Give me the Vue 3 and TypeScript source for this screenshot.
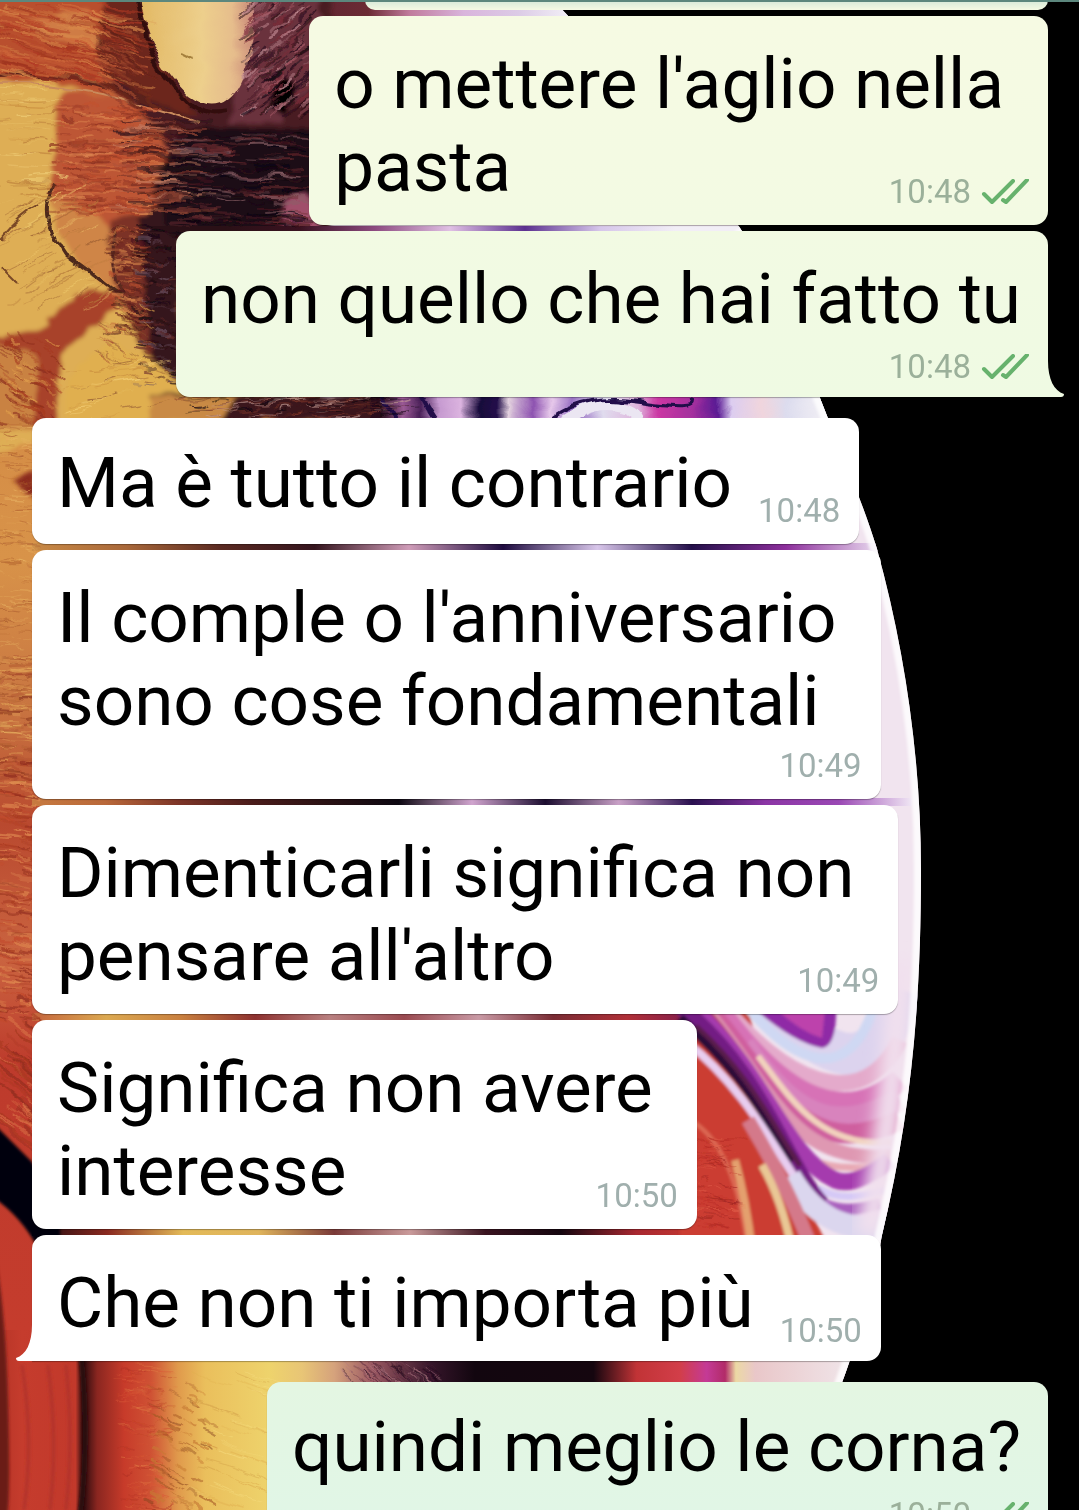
<script setup lang="ts">
type Layout = 'beside' | 'below'

interface Message {
  id: number
  lines: string[]
  time: string
  sent: boolean
  layout: Layout
  tail?: boolean
  newGroup?: boolean
  tint?: string
}

const messages: Message[] = [
  { id: 1, lines: ["o mettere l'aglio nella", 'pasta'], time: '10:48', sent: true, layout: 'beside', tint: 'tint-a' },
  { id: 2, lines: ['non quello che hai fatto tu'], time: '10:48', sent: true, layout: 'below', tail: true, tint: 'tint-b' },
  { id: 3, lines: ['Ma è tutto il contrario'], time: '10:48', sent: false, layout: 'beside', newGroup: true },
  { id: 4, lines: ["Il comple o l'anniversario", 'sono cose fondamentali'], time: '10:49', sent: false, layout: 'below' },
  { id: 5, lines: ['Dimenticarli significa non', "pensare all'altro"], time: '10:49', sent: false, layout: 'beside' },
  { id: 6, lines: ['Significa non avere', 'interesse'], time: '10:50', sent: false, layout: 'beside' },
  { id: 7, lines: ['Che non ti importa più'], time: '10:50', sent: false, layout: 'beside', tail: true },
  { id: 8, lines: ['quindi meglio le corna?'], time: '10:50', sent: true, layout: 'below', newGroup: true, tint: 'tint-c' },
]

/* Lines above the footer row; the footer holds the time and, when it fits, the last line */
const lead = (m: Message): string[] => (m.layout === 'beside' ? m.lines.slice(0, -1) : m.lines)
const last = (m: Message): string => (m.layout === 'beside' ? m.lines[m.lines.length - 1] : '')

/* Wallpaper: seeded brush strokes laid over painted areas */
interface Stroke { d: string; color: string; width: number; opacity: number }

let seed = 17
function rnd(): number {
  seed = (seed * 16807) % 2147483647
  return seed / 2147483647
}

function hatch(
  x: number, y: number, w: number, h: number,
  count: number, length: number, slope: number, colors: string[], size = 2,
): Stroke[] {
  return Array.from({ length: count }, () => {
    const sx = Math.round(x + rnd() * w)
    const sy = Math.round(y + rnd() * h)
    const len = Math.round(length * (0.4 + rnd()))
    const dy = Math.round(len * slope)
    const bend = Math.round((rnd() - 0.5) * 8)
    return {
      d: `M${sx} ${sy}q${Math.round(len / 2)} ${Math.round(dy / 2) + bend} ${len} ${dy}`,
      color: colors[Math.floor(rnd() * colors.length)],
      width: size * (0.5 + rnd()),
      opacity: 0.25 + rnd() * 0.45,
    }
  })
}

const strokes: Stroke[] = [
  ...hatch(-20, 4, 130, 70, 150, 40, 0.25, ['#9c3420', '#d98a4a', '#b23a24', '#cf6a3c']),
  ...hatch(95, 20, 20, 70, 50, 34, 0.6, ['#5c2018', '#a0482e', '#7c2c20']),
  ...hatch(48, 105, 100, 110, 260, 22, 0.02, ['#9e3d28', '#dc8650', '#c4512f', '#8a3020']),
  ...hatch(110, 120, 70, 90, 120, 30, 0.03, ['#4a1a18', '#a8503a', '#24101a', '#c07a60']),
  ...hatch(165, 130, 130, 95, 170, 28, 0.05, ['#0c0710', '#6f2d30', '#8a6066', '#4a1820', '#1c0c16']),
  ...hatch(240, 0, 65, 120, 200, 14, -0.8, ['#2a0e16', '#a65a66', '#7a2c38', '#150a14', '#c08a92']),
  ...hatch(104, 225, 32, 110, 130, 12, 0.1, ['#6c261c', '#b8502f', '#d08048', '#4c1a18']),
  ...hatch(132, 225, 45, 160, 130, 12, 0.1, ['#2c0f12', '#6a2c28', '#120a12', '#6a5060']),
  ...hatch(-15, 85, 50, 110, 40, 34, 0.02, ['#c98d3e', '#f0cf78', '#b87a38'], 1),
  ...hatch(-5, 200, 95, 110, 60, 22, -0.6, ['#b5793a', '#f0cc70', '#94582f'], 1),
  ...hatch(-8, 335, 60, 85, 90, 12, 0.6, ['#a5381f', '#e2a04c', '#8a2c1c']),
  ...hatch(95, 300, 50, 60, 60, 10, 0.6, ['#d09a48', '#8f5530', '#a5482f'], 1),
  ...hatch(60, 360, 100, 60, 30, 22, -0.2, ['#c98d3e', '#8f5530', '#f4d078'], 1),
  ...hatch(-12, 420, 40, 330, 180, 20, 0.05, ['#b0602e', '#e2a658', '#a0502a', '#eab765'], 1),
  ...hatch(-12, 650, 40, 150, 60, 22, 0.02, ['#8d3a20', '#e2a658', '#a8482a']),
  ...hatch(-12, 760, 40, 260, 150, 22, 0.15, ['#a5381f', '#e08a50', '#c24a2c', '#8d2a1c']),
  ...hatch(-12, 1010, 44, 120, 50, 34, 0.8, ['#a5381f', '#dd7a4a', '#8a2a1c']),
  ...hatch(115, 1362, 50, 150, 110, 14, 0.05, ['#d95a38', '#b23424', '#e07a44'], 1),
  ...hatch(145, 1385, 60, 125, 60, 12, 0.5, ['#a65a26', '#c67a34', '#8a4520']),
  ...hatch(185, 1362, 90, 130, 30, 44, 0.35, ['#e0b050', '#f6dd80', '#cf9a44'], 1),
  ...hatch(175, 397, 215, 21, 110, 24, -0.1, ['#0d0710', '#8a3c2c', '#c9a098', '#5a2420'], 1),
  ...hatch(690, 1135, 40, 110, 90, 14, 0.15, ['#9f2622', '#e2604a', '#b52a24'], 1),
  ...hatch(340, 1360, 90, 22, 70, 14, 0.8, ['#1c0a18', '#b07884', '#4a1c34'], 1),
]

const swirls: { d: string; color: string; width: number }[] = [
  { d: 'M770 1000C800 1030 870 1110 902 990', color: '#dcd3ee', width: 42 },
  { d: 'M742 1000C790 1062 850 1092 876 1000', color: '#cfd8f3', width: 10 },
  { d: 'M718 1000C780 1078 860 1120 900 1040', color: '#e4aacb', width: 16 },
  { d: 'M712 1000C775 1092 840 1132 900 1080', color: '#d772b6', width: 22 },
  { d: 'M744 1045C792 1112 830 1138 900 1100', color: '#d883bd', width: 22 },
  { d: 'M700 1000C765 1072 800 1170 900 1120', color: '#cf5f9f', width: 20 },
  { d: 'M758 1056C790 1098 820 1148 890 1142', color: '#f2d3bd', width: 6 },
  { d: 'M705 1010C770 1085 790 1165 890 1156', color: '#df98b2', width: 14 },
  { d: 'M700 1010C765 1085 790 1150 815 1166', color: '#b73864', width: 16 },
  { d: 'M760 1110C790 1150 810 1178 890 1164', color: '#e8a9b4', width: 7 },
  { d: 'M700 1015C770 1085 785 1155 835 1180Q855 1188 890 1160', color: '#a53aae', width: 17 },
  { d: 'M818 1188Q842 1204 884 1190', color: '#d5c9f6', width: 7 },
  { d: 'M806 1192Q834 1220 880 1204', color: '#a95fbe', width: 12 },
  { d: 'M680 1006C765 1075 785 1165 822 1204', color: '#731f84', width: 16 },
  { d: 'M680 1018C745 1075 765 1118 794 1160', color: '#2b0838', width: 9 },
  { d: 'M696 1026C750 1075 770 1120 800 1166', color: '#5a1a4c', width: 5 },
  { d: 'M686 1042C750 1090 785 1170 815 1206Q840 1230 890 1210', color: '#e8cdf0', width: 8 },
  { d: 'M790 1176Q830 1244 900 1222', color: '#dbd6ee', width: 22 },
  { d: 'M748 1120Q790 1190 812 1250', color: '#d4798a', width: 14 },
  { d: 'M762 1165Q782 1200 792 1250', color: '#e9c795', width: 8 },
  { d: 'M690 1120Q735 1145 748 1250', color: '#dd6a54', width: 4 },
  { d: 'M735 1160Q746 1200 752 1250', color: '#e4a06e', width: 8 },
]

/* Thin slices of wallpaper that show between neighbouring bubbles */
const slices = [
  { id: 'slice-a', y: 226, h: 6, stops: ['#2a1016', '#2a1016', '#3a1220', '#8d4a80', '#e0c0e4', '#5c3090', '#d6c6ea', '#f2eef6', '#f2eef6'], x: 150, w: 600 },
  { id: 'slice-b', y: 543, h: 8, stops: ['#c98a45', '#a9683a', '#5b2a22', '#35151e', '#cf9cb8', '#1f0c40', '#d8c6ea', '#24104a', '#8d2f9c', '#eadcf0'], x: 32, w: 848 },
  { id: 'slice-c', y: 798, h: 8, stops: ['#c77a40', '#b9683a', '#7d3528', '#4b1c1b', '#2b1214', '#0d0812', '#d0a4ce', '#1c0d30', '#c8a0c6', '#2a1050', '#8b35a5', '#9a48b4', '#f0e6f4'], x: 32, w: 880 },
  { id: 'slice-d', y: 1013, h: 8, stops: ['#c4633c', '#dca951', '#c9803f', '#8e3230', '#b98080', '#9a4a50', '#c99aa5', '#7a2c34', '#b03038', '#7a1b50'], x: 32, w: 670 },
  { id: 'slice-e', y: 1228, h: 8, stops: ['#1c0a10', '#8a2a20', '#e3ba58', '#dfb45c', '#7a3a38', '#c99a9a', '#3a1420', '#15060f', '#a82830', '#cb3c31'], x: 32, w: 680 },
]
</script>

<template>
  <main class="chat">
    <svg class="wallpaper" viewBox="0 0 1079 1510" preserveAspectRatio="xMidYMid slice" aria-hidden="true">
      <defs>
        <filter id="rough" x="-5%" y="-5%" width="110%" height="110%">
          <feTurbulence type="fractalNoise" baseFrequency="0.04 0.07" numOctaves="3" seed="4" result="n" />
          <feDisplacementMap in="SourceGraphic" in2="n" scale="14" xChannelSelector="R" yChannelSelector="G" />
          <feGaussianBlur stdDeviation="2" />
        </filter>
        <filter id="soft" x="-5%" y="-5%" width="110%" height="110%">
          <feTurbulence type="fractalNoise" baseFrequency="0.03 0.05" numOctaves="3" seed="4" result="n" />
          <feDisplacementMap in="SourceGraphic" in2="n" scale="12" xChannelSelector="R" yChannelSelector="G" />
          <feGaussianBlur stdDeviation="0.7" />
        </filter>
        <filter id="silky"><feGaussianBlur stdDeviation="1.5" /></filter>
        <filter id="haze" x="-50%" y="-10%" width="200%" height="120%"><feGaussianBlur stdDeviation="8" /></filter>
        <linearGradient v-for="s in slices" :id="s.id" :key="s.id">
          <stop v-for="(c, i) in s.stops" :key="i" :offset="i / (s.stops.length - 1)" :stop-color="c" />
        </linearGradient>
        <linearGradient id="strip" x1="0" y1="0" x2="0" y2="1">
          <stop offset="0" stop-color="#c96a3b" />
          <stop offset="0.28" stop-color="#d38a45" />
          <stop offset="0.42" stop-color="#d89349" />
          <stop offset="0.53" stop-color="#c87541" />
          <stop offset="0.62" stop-color="#b9492f" />
          <stop offset="0.72" stop-color="#ca6440" />
          <stop offset="0.8" stop-color="#bd3b2c" />
          <stop offset="1" stop-color="#c53c2d" />
        </linearGradient>
        <linearGradient id="lobe" x1="0" y1="0" x2="1" y2="0">
          <stop offset="0" stop-color="#e2b863" />
          <stop offset="0.55" stop-color="#edcf8c" />
          <stop offset="0.8" stop-color="#e6bd8c" />
          <stop offset="1" stop-color="#c98878" />
        </linearGradient>
        <linearGradient id="top" gradientUnits="userSpaceOnUse" x1="300" y1="0" x2="573" y2="0">
          <stop offset="0" stop-color="#5c2430" />
          <stop offset="0.25" stop-color="#6b2a34" />
          <stop offset="0.4" stop-color="#c07a9c" />
          <stop offset="0.6" stop-color="#d9b4dc" />
          <stop offset="0.8" stop-color="#dccbe6" />
          <stop offset="1" stop-color="#f4f2f8" />
        </linearGradient>
        <linearGradient id="base" gradientUnits="userSpaceOnUse" x1="0" y1="0" x2="1079" y2="0">
          <stop offset="0" stop-color="#b83527" />
          <stop offset="0.02" stop-color="#c53c2d" />
          <stop offset="0.07" stop-color="#c2392b" />
          <stop offset="0.077" stop-color="#2b0b0e" />
          <stop offset="0.09" stop-color="#8a2620" />
          <stop offset="0.115" stop-color="#c73b2a" />
          <stop offset="0.14" stop-color="#cf5234" />
          <stop offset="0.165" stop-color="#e09a4c" />
          <stop offset="0.19" stop-color="#eabf5c" />
          <stop offset="0.25" stop-color="#eed36c" />
          <stop offset="0.28" stop-color="#e8c576" />
          <stop offset="0.31" stop-color="#d5a27c" />
          <stop offset="0.345" stop-color="#9b5962" />
          <stop offset="0.4" stop-color="#35152a" />
          <stop offset="0.44" stop-color="#12060f" />
          <stop offset="0.55" stop-color="#15060f" />
          <stop offset="0.59" stop-color="#c13336" />
          <stop offset="0.63" stop-color="#d23e49" />
          <stop offset="0.655" stop-color="#c43a96" />
          <stop offset="0.672" stop-color="#b22b68" />
          <stop offset="0.682" stop-color="#ecd9a4" />
          <stop offset="0.7" stop-color="#e9c7c9" />
          <stop offset="0.78" stop-color="#efe2e6" />
        </linearGradient>
        <linearGradient id="band" gradientUnits="userSpaceOnUse" x1="380" y1="0" x2="830" y2="0">
          <stop offset="0" stop-color="#2a0e1c" />
          <stop offset="0.05" stop-color="#9a5a95" />
          <stop offset="0.09" stop-color="#4a2058" />
          <stop offset="0.13" stop-color="#c69ad0" />
          <stop offset="0.18" stop-color="#dcb4e0" />
          <stop offset="0.22" stop-color="#17093a" />
          <stop offset="0.26" stop-color="#24104a" />
          <stop offset="0.29" stop-color="#e2d0de" />
          <stop offset="0.34" stop-color="#8d52b0" />
          <stop offset="0.38" stop-color="#e6c8ea" />
          <stop offset="0.43" stop-color="#9a72c4" />
          <stop offset="0.5" stop-color="#e0dcee" />
          <stop offset="0.57" stop-color="#dfb4dc" />
          <stop offset="0.62" stop-color="#cb37a3" />
          <stop offset="0.7" stop-color="#a32f9e" />
          <stop offset="0.75" stop-color="#5b1b94" />
          <stop offset="0.78" stop-color="#dccdf0" />
          <stop offset="0.85" stop-color="#f0d5dd" />
          <stop offset="0.9" stop-color="#dcdcee" />
          <stop offset="1" stop-color="#f3f0f5" />
        </linearGradient>
        <clipPath id="planet">
          <path d="M0 0H553C630 80 695 155 740 228C780 290 800 345 820 398C840 450 862 500 877 549C905 650 921 760 921 870C921 1000 912 1110 882 1235C872 1290 860 1335 840 1388C820 1440 800 1480 785 1510H0Z" />
        </clipPath>
      </defs>
      <rect width="1079" height="1510" fill="#000" />
      <g clip-path="url(#planet)">
        <rect width="1079" height="1510" fill="#f1e4ef" />
        <rect y="1240" width="1079" height="270" fill="url(#base)" />
        <rect width="320" height="1330" fill="url(#strip)" />
        <rect x="300" width="300" height="20" fill="url(#top)" />
        <g filter="url(#rough)">
          <path d="M-20 -20H150L170 60L130 95L-20 75Z" fill="#b9502f" />
          <path d="M20 20L90 8L130 60L60 40Z" fill="#cf7c44" />
          <path d="M-20 82Q40 74 80 90L50 180L120 300L165 400L-20 460Z" fill="#deae54" />
          <path d="M60 95Q110 85 175 120L165 240L125 300Q70 255 50 195Z" fill="#bd5736" />
          <path d="M50 200Q90 200 112 230L116 292Q60 260 50 200Z" fill="#cf8546" />
          <path d="M110 -20H330V240H190L160 130L110 85L130 50Z" fill="#4a1e20" />
          <path d="M105 -10L138 -10L150 50L200 118L145 100L95 60Z" fill="#6c251d" />
          <path d="M110 220L180 205V400L140 350L130 320L112 280Z" fill="#7c3226" />
          <path d="M140 215L180 205V400L150 350Z" fill="#35151a" />
          <path d="M180 128H320V235H170L150 190Z" fill="#1e0d15" />
          <path d="M245 -10H320V80L280 120L230 125Z" fill="#6b303c" />
          <path d="M285 200Q320 180 320 240H285Z" fill="#a0506a" />
          <path d="M282 72Q308 90 285 115L265 108Z" fill="#040206" />
          <path d="M120 290Q60 290 45 330L-10 340V430H52L65 350L115 308Z" fill="#a8422a" />
          <path d="M-10 345Q20 340 38 360L36 430H-10Z" fill="#c98242" />
          <path d="M62 440Q60 360 110 345Q165 350 190 400V440Z" fill="#e0af50" />
          <path d="M14 482L34 470V500Z" fill="#8a2a1c" />
          <path d="M150 395H400V422H150Z" fill="#3b181b" />
          <path d="M150 397H235L220 422H150Z" fill="#c98a45" />
        </g>
        <g filter="url(#soft)">
          <path d="M138 -14Q142 50 188 96Q222 120 240 84Q262 40 252 -14Z" fill="url(#lobe)" />
          <path d="M136 -12Q140 53 184 100Q202 120 226 114" fill="none" stroke="#33110f" stroke-width="4" />
          <path d="M180 52L192 58" stroke="#a5803e" stroke-width="2" />
          <path d="M-10 74Q60 72 110 88T190 118" fill="none" stroke="#5a221a" stroke-width="4" />
          <path d="M-10 84Q60 82 120 98T200 122" fill="none" stroke="#c98a5c" stroke-width="2" />
          <path d="M56 183C41 210 52 235 66 255Q94 275 122 297" fill="none" stroke="#4d2a1c" stroke-width="4" />
          <path d="M112 230Q112 280 124 296" fill="none" stroke="#5a2a20" stroke-width="3" />
          <path d="M2 268L16 282M0 240Q20 215 40 205" fill="none" stroke="#7a4a28" stroke-width="2" />
        </g>
        <g filter="url(#soft)">
          <path d="M370 390H880V426H370Z" fill="url(#band)" />
          <path d="M540 430Q575 392 640 402T690 398M400 426Q390 410 380 395M440 426Q425 405 420 392" fill="none" stroke="#20104a" stroke-width="4" />
          <path d="M555 428Q590 402 615 406T640 428" fill="none" stroke="#ebe6f2" stroke-width="9" />
        </g>
        <rect v-for="s in slices" :key="s.id" :x="s.x" :y="s.y" :width="s.w" :height="s.h" :fill="`url(#${s.id})`" />
        <g filter="url(#silky)">
          <path d="M680 1000H745L800 1190L830 1250H680Z" fill="#cb3c31" />
          <path
            v-for="(s, i) in swirls" :key="i" :d="s.d" :stroke="s.color" :stroke-width="s.width"
            fill="none"
          />
          <path d="M745 1000Q790 1042 822 1048Q838 1046 836 1000Z" fill="#8f2aa6" />
          <path d="M768 1000H826L822 1038Q795 1030 768 1000Z" fill="#bd42ac" />
          <path d="M-10 1120L32 1162L60 1220V1245H36Q20 1215 -10 1195Z" fill="#06060b" />
          <path d="M-10 1230Q5 1290 8 1400T6 1520H-10Z" fill="#6b1c18" />
          <path d="M81 1355Q90 1440 80 1515" fill="none" stroke="#2c0c0e" stroke-width="5" />
          <path d="M22 1365Q34 1440 24 1510M48 1365Q58 1440 50 1510M66 1365Q74 1440 66 1510" fill="none" stroke="#b0332a" stroke-width="3" />
        </g>
        <path d="M900 960Q894 1120 868 1236" fill="none" stroke="#f1e0ee" stroke-width="26" filter="url(#haze)" />
        <g filter="url(#soft)">
          <path
            v-for="(s, i) in strokes" :key="i" :d="s.d" :stroke="s.color" :stroke-width="s.width"
            :opacity="s.opacity" fill="none" stroke-linecap="round"
          />
        </g>
        <path d="M740 228C780 290 800 345 820 398C840 450 862 500 877 549C905 650 921 760 921 870C921 1000 912 1110 882 1235C872 1290 860 1335 840 1388" fill="none" stroke="#fff" stroke-width="14" opacity="0.8" filter="url(#silky)" />
      </g>
    </svg>

    <div class="status-edge"></div>
    <div class="previous"></div>

    <article
      v-for="m in messages" :key="m.id" class="bubble"
      :class="[m.layout, m.tint, { sent: m.sent, multi: m.lines.length > 1, tailed: m.tail, 'new-group': m.newGroup }]"
    >
      <p v-for="line in lead(m)" :key="line" class="text">{{ line }}</p>
      <div class="footer">
        <p v-if="last(m)" class="text">{{ last(m) }}</p>
        <div class="meta">
          <time>{{ m.time }}</time>
          <svg v-if="m.sent" class="ticks" viewBox="0 0 48 26" role="img" aria-label="Consegnato">
            <path d="M3 15L11 23L32 2M22 21L25 23L46 1" />
          </svg>
        </div>
      </div>
      <svg v-if="m.tail" class="tail" viewBox="0 0 16 36" aria-hidden="true">
        <path v-if="m.sent" d="M0 0C0 18 6 30 16 33Q16 36 13 36H0Z" />
        <path v-else d="M16 0C16 18 10 30 0 33Q0 36 3 36H16Z" />
      </svg>
    </article>
  </main>
</template>

<style>
body {
  background: #000;
}
</style>

<style scoped>
.chat {
  position: relative;
  display: flex;
  flex-direction: column;
  align-items: flex-start;
  gap: 6px;
  box-sizing: border-box;
  height: 100vh;
  padding: 0 31px 0 32px;
  overflow: hidden;
  font-family: Roboto, sans-serif;
  color: #000;
}

.wallpaper {
  position: absolute;
  inset: 0;
  width: 100%;
  height: 100%;
}

.status-edge {
  position: absolute;
  inset: 0 0 auto;
  z-index: 2;
  height: 2px;
  background: #5c877d;
}

.previous {
  position: relative;
  flex: none;
  align-self: flex-end;
  width: 683px;
  max-width: 100%;
  height: 10px;
  border-radius: 0 0 14px 14px;
  background: linear-gradient(#d5e8d8, #f5fae3);
}

.bubble {
  position: relative;
  flex: none;
  box-sizing: border-box;
  max-width: 100%;
  padding: 26px 19px 13px 25px;
  border-radius: 14px;
  background: #fff;
  box-shadow: 0 1px 1px rgba(0, 0, 0, 0.3);
}

.bubble.sent {
  align-self: flex-end;
}

.bubble.tint-a { background: linear-gradient(#f6fae3, #f3fae3); }
.bubble.tint-b { background: linear-gradient(#f2fae3, #effae3); }
.bubble.tint-c { background: linear-gradient(#e4f6e2, #e0f6e7); }

.bubble.new-group {
  margin-top: 15px;
  padding-top: 23px;
}

.text {
  margin: 0;
  font-size: 71px;
  line-height: 83px;
}

.below > .text {
  padding-right: 8px;
}

.multi > .text {
  padding-right: 25px;
}

.footer {
  display: flex;
  align-items: flex-end;
  justify-content: flex-end;
  gap: 26px;
}

.footer .text {
  flex: 1;
  margin-bottom: 4px;
}

.below .footer {
  margin-top: 4px;
}

.bubble.tailed {
  padding-bottom: 10px;
}

.tailed .footer .text,
.new-group .footer .text {
  margin-bottom: 7px;
}

.below.tailed .footer,
.below.new-group .footer {
  margin-top: 7px;
}

.meta {
  display: flex;
  align-items: center;
  gap: 10px;
  font-size: 33px;
  line-height: 40px;
  color: #a0afad;
}

.sent .meta {
  color: #9bb09a;
}

.ticks {
  width: 48px;
  height: 26px;
  fill: none;
  stroke: #67b26d;
  stroke-width: 4;
  stroke-linecap: round;
  stroke-linejoin: round;
}

.tail {
  position: absolute;
  right: 100%;
  bottom: 0;
  width: 16px;
  height: 36px;
  fill: #fff;
}

.sent .tail {
  right: auto;
  left: 100%;
  fill: #effae3;
}

.bubble.tailed {
  border-bottom-left-radius: 0;
}

.bubble.sent.tailed {
  border-bottom-left-radius: 14px;
  border-bottom-right-radius: 0;
}
</style>
